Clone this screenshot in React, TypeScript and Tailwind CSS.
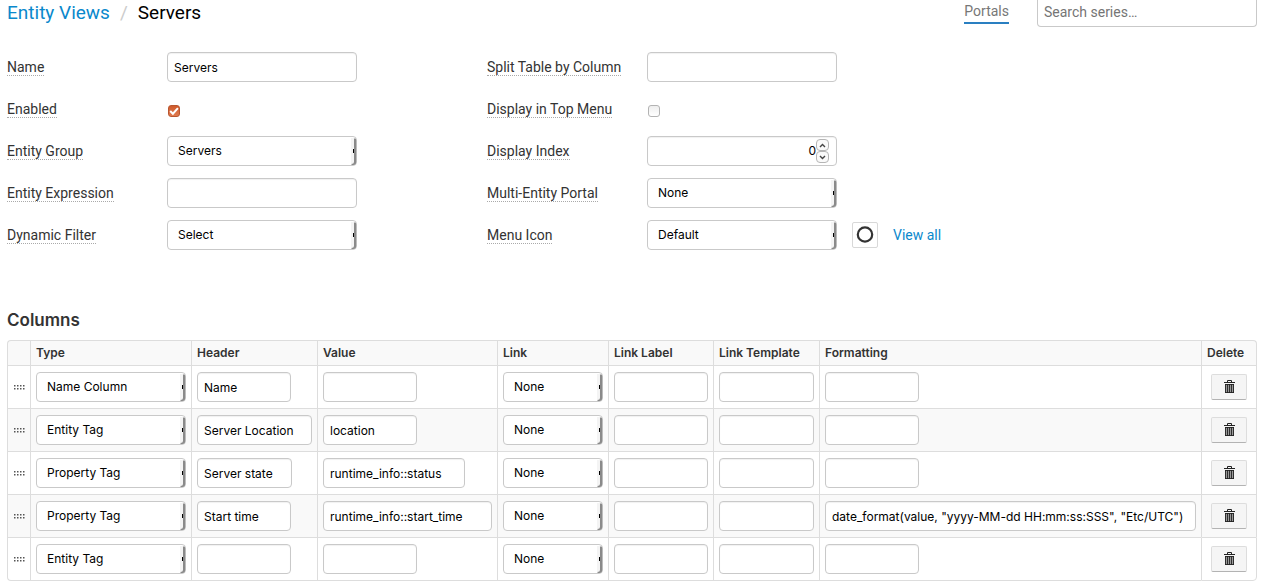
import type { ReactNode } from 'react';

const fieldClass =
  'block h-[30px] rounded border border-[#c9c9c9] bg-white px-1.5 font-[Inter,sans-serif] text-xs text-black shadow-[inset_0_1px_1px_rgba(0,0,0,0.06)] outline-none focus:border-[#2a7fc1]';

type SelectProps = { id?: string; label?: string; value: string; options: string[]; width: string };

function Select({ id, label, value, options, width }: SelectProps) {
  return (
    <div className={`relative h-[30px] ${width}`}>
      <select
        id={id}
        aria-label={label}
        defaultValue={value}
        className="h-full w-full appearance-none rounded border border-[#c9c9c9] bg-white px-2.5 font-[Inter,sans-serif] text-xs text-black outline-none"
      >
        {options.map((option) => (
          <option key={option}>{option}</option>
        ))}
      </select>
      <svg
        aria-hidden="true"
        className="pointer-events-none absolute top-0 right-0"
        width="6"
        height="30"
        viewBox="0 0 6 30"
      >
        <rect x="0" y="2" width="3" height="26" fill="#f4f4f4" />
        <path d="M3 2.5 H4.5 Q5.2 3 5.2 4.5 V26 Q5.2 29 2.5 29 H0.5 V28 Q3 28 3 26 Z" fill="#8a8a8a" />
        <rect x="2" y="13" width="1" height="4" fill="#000" />
      </svg>
    </div>
  );
}

function FormRow({ id, label, children }: { id: string; label: string; children: ReactNode }) {
  return (
    <div className="flex h-[30px] items-center">
      <div className="w-40 shrink-0">
        <label
          htmlFor={id}
          className="inline-block border-b border-dotted border-[#aaa] align-middle text-sm leading-[15px] whitespace-nowrap"
        >
          {label}
        </label>
      </div>
      {children}
    </div>
  );
}

function Checkbox({ id, checked }: { id: string; checked?: boolean }) {
  return (
    <div className="mt-1 ml-px grid h-3 w-3">
      <input
        id={id}
        type="checkbox"
        defaultChecked={checked}
        className="peer col-start-1 row-start-1 h-3 w-3 appearance-none rounded-[3px] border border-[#b3b3b3] bg-gradient-to-b from-[#eeeeee] to-white checked:border-[#b9562f] checked:from-[#cf5a2b] checked:to-[#e07b4f]"
      />
      <svg
        aria-hidden="true"
        className="pointer-events-none col-start-1 row-start-1 hidden peer-checked:block"
        width="12"
        height="12"
        viewBox="0 0 12 12"
      >
        <path d="M2.2 6 L4.9 8.7 L9.9 3.2" fill="none" stroke="#fff" strokeWidth="2" />
      </svg>
    </div>
  );
}

function SpinButton({ label, path }: { label: string; path: string }) {
  return (
    <button
      type="button"
      aria-label={label}
      className="flex h-3 w-[13px] items-center justify-center rounded border border-[#b5b5b5] bg-[#fafafa]"
    >
      <svg width="7" height="5" viewBox="0 0 7 5" aria-hidden="true">
        <path d={path} fill="none" stroke="#444" strokeWidth="1.4" />
      </svg>
    </button>
  );
}

function TrashIcon() {
  return (
    <svg width="11" height="14" viewBox="0 0 11 14" aria-hidden="true">
      <path d="M3.5 2.5 V0.5 H7.5 V2.5" fill="none" stroke="#222" />
      <rect x="0" y="2" width="11" height="1" fill="#222" />
      <path d="M1 4 H10 V13 H1 Z" fill="#999" />
      <path
        d="M1.5 4 V13 M3.5 4 V13 M5.5 4 V13 M7.5 4 V13 M9.5 4 V13 M1 4.5 H10 M1 12.5 H10"
        fill="none"
        stroke="#222"
        strokeWidth="0.9"
      />
    </svg>
  );
}

function DragHandle() {
  return (
    <svg width="11" height="5" viewBox="0 0 11 5" aria-hidden="true" className="mx-auto">
      {[0, 3, 6, 9].map((x) => (
        <g key={x} fill="#555">
          <rect x={x} y="0" width="1.5" height="1.5" />
          <rect x={x} y="3" width="1.5" height="1.5" />
        </g>
      ))}
    </svg>
  );
}

type Row = {
  type: string;
  header: string;
  value: string;
  formatting: string;
  headerWidth: string;
  valueWidth: string;
  formattingWidth: string;
};

const rows: Row[] = [
  { type: 'Name Column', header: 'Name', value: '', formatting: '', headerWidth: 'w-[94px]', valueWidth: 'w-[94px]', formattingWidth: 'w-[94px]' },
  { type: 'Entity Tag', header: 'Server Location', value: 'location', formatting: '', headerWidth: 'w-[115px]', valueWidth: 'w-[94px]', formattingWidth: 'w-[94px]' },
  { type: 'Property Tag', header: 'Server state', value: 'runtime_info::status', formatting: '', headerWidth: 'w-[95px]', valueWidth: 'w-[142px]', formattingWidth: 'w-[94px]' },
  { type: 'Property Tag', header: 'Start time', value: 'runtime_info::start_time', formatting: 'date_format(value, "yyyy-MM-dd HH:mm:ss:SSS", "Etc/UTC")', headerWidth: 'w-[94px]', valueWidth: 'w-[169px]', formattingWidth: 'w-[371px]' },
  { type: 'Entity Tag', header: '', value: '', formatting: '', headerWidth: 'w-[94px]', valueWidth: 'w-[94px]', formattingWidth: 'w-[94px]' },
];

const columns = [
  { title: '', width: 'w-[23px]' },
  { title: 'Type', width: 'w-[161px]' },
  { title: 'Header', width: 'w-[126px]' },
  { title: 'Value', width: 'w-[180px]' },
  { title: 'Link', width: 'w-[111px]' },
  { title: 'Link Label', width: 'w-[105px]' },
  { title: 'Link Template', width: 'w-[106px]' },
  { title: 'Formatting', width: '' },
  { title: 'Delete', width: 'w-[56px]' },
];

const cell =
  'border-t border-l border-[#ddd] pl-[5px] group-last:border-b group-last:last:rounded-br last:border-r';

export default function App() {
  return (
    <main className="bg-white pr-2.5 pl-[7px] font-[Roboto,sans-serif] text-sm text-[#333]">
      <header className="flex h-7 items-start justify-between">
        <nav aria-label="Breadcrumb" className="flex gap-2.5 text-[19px] leading-[26px]">
          <a href="#entity-views" className="text-[#0a88cc]">Entity Views</a>
          <span className="text-[#ccc]">/</span>
          <h1 className="text-black">Servers</h1>
        </nav>
        <div className="flex items-start gap-7">
          <a href="#portals" className="border-b-2 border-[#2a7fc1] text-sm leading-[22px] text-[#777]">
            Portals
          </a>
          <input
            type="search"
            aria-label="Search series"
            placeholder="Search series…"
            className="h-[27px] w-[220px] rounded-b border border-t-0 border-[#c9c9c9] px-1.5 pb-0.5 text-sm outline-none placeholder:text-[#757575]"
          />
        </div>
      </header>

      <form className="mt-6 flex gap-[130px]">
        <div className="flex flex-col gap-3">
          <FormRow id="name" label="Name">
            <input id="name" defaultValue="Servers" className={`w-[190px] ${fieldClass}`} />
          </FormRow>
          <FormRow id="enabled" label="Enabled">
            <Checkbox id="enabled" checked />
          </FormRow>
          <FormRow id="entity-group" label="Entity Group">
            <Select id="entity-group" value="Servers" options={['Servers']} width="w-[190px]" />
          </FormRow>
          <FormRow id="expression" label="Entity Expression">
            <input id="expression" className={`w-[190px] ${fieldClass}`} />
          </FormRow>
          <FormRow id="filter" label="Dynamic Filter">
            <Select id="filter" value="Select" options={['Select']} width="w-[190px]" />
          </FormRow>
        </div>
        <div className="flex flex-col gap-3">
          <FormRow id="split" label="Split Table by Column">
            <input id="split" className={`w-[190px] ${fieldClass}`} />
          </FormRow>
          <FormRow id="top-menu" label="Display in Top Menu">
            <Checkbox id="top-menu" />
          </FormRow>
          <FormRow id="index" label="Display Index">
            <div className="flex h-[30px] w-[190px] items-center rounded border border-[#c9c9c9] bg-white pr-[7px] shadow-[inset_0_1px_1px_rgba(0,0,0,0.06)]">
              <input
                id="index"
                type="number"
                defaultValue={0}
                className="min-w-0 flex-1 [appearance:textfield] text-right font-[Inter,sans-serif] text-xs text-black outline-none [&::-webkit-inner-spin-button]:appearance-none"
              />
              <div className="flex flex-col">
                <SpinButton label="Increase" path="M1 4 L3.5 1.5 L6 4" />
                <SpinButton label="Decrease" path="M1 1 L3.5 3.5 L6 1" />
              </div>
            </div>
          </FormRow>
          <FormRow id="portal" label="Multi-Entity Portal">
            <Select id="portal" value="None" options={['None']} width="w-[190px]" />
          </FormRow>
          <FormRow id="icon" label="Menu Icon">
            <Select id="icon" value="Default" options={['Default']} width="w-[190px]" />
            <button
              type="button"
              aria-label="Selected icon"
              className="ml-[15px] flex h-[26px] w-[26px] items-center justify-center rounded-xs border border-[#d8d8d8]"
            >
              <svg width="18" height="18" viewBox="0 0 18 18" aria-hidden="true">
                <circle cx="9" cy="8.5" r="7.2" fill="none" stroke="#333" strokeWidth="2.2" />
              </svg>
            </button>
            <a href="#icons" className="ml-[15px] text-sm text-[#0a88cc]">View all</a>
          </FormRow>
        </div>
      </form>

      <h2 className="mt-[60px] font-[Inter,sans-serif] text-[17px] leading-5 font-semibold">Columns</h2>
      <table className="mt-2.5 w-full table-fixed border-separate border-spacing-0 font-[Inter,sans-serif] text-xs">
        <thead>
          <tr className="bg-[#f9f9f9]">
            {columns.map((column) => (
              <th
                key={column.title}
                scope="col"
                className={`h-[25px] border-t border-l border-[#ddd] pl-[5px] text-left font-semibold whitespace-nowrap first:rounded-tl last:rounded-tr last:border-r ${column.width}`}
              >
                {column.title}
              </th>
            ))}
          </tr>
        </thead>
        <tbody>
          {rows.map((row, index) => (
            <tr key={index} className="group h-[43px] last:h-11 even:bg-[#f9f9f9]">
              <td className="border-t border-l border-[#ddd] group-last:rounded-bl group-last:border-b">
                <DragHandle />
              </td>
              <td className={cell}>
                <Select
                  label="Type"
                  value={row.type}
                  options={['Name Column', 'Entity Tag', 'Property Tag']}
                  width="w-[150px]"
                />
              </td>
              <td className={cell}>
                <input aria-label="Header" defaultValue={row.header} className={`${row.headerWidth} ${fieldClass}`} />
              </td>
              <td className={cell}>
                <input aria-label="Value" defaultValue={row.value} className={`${row.valueWidth} ${fieldClass}`} />
              </td>
              <td className={cell}>
                <Select label="Link" value="None" options={['None']} width="w-[100px]" />
              </td>
              <td className={cell}>
                <input aria-label="Link Label" className={`w-[94px] ${fieldClass}`} />
              </td>
              <td className={cell}>
                <input aria-label="Link Template" className={`w-[95px] ${fieldClass}`} />
              </td>
              <td className={cell}>
                <input
                  aria-label="Formatting"
                  defaultValue={row.formatting}
                  className={`${row.formattingWidth} ${fieldClass}`}
                />
              </td>
              <td className={cell}>
                <button
                  type="button"
                  aria-label="Delete column"
                  className="ml-1 flex h-[26px] w-9 items-center justify-center rounded-xs border border-[#ddd] border-b-[#b3b3b3] bg-[#f5f5f5]"
                >
                  <TrashIcon />
                </button>
              </td>
            </tr>
          ))}
        </tbody>
      </table>
    </main>
  );
}
